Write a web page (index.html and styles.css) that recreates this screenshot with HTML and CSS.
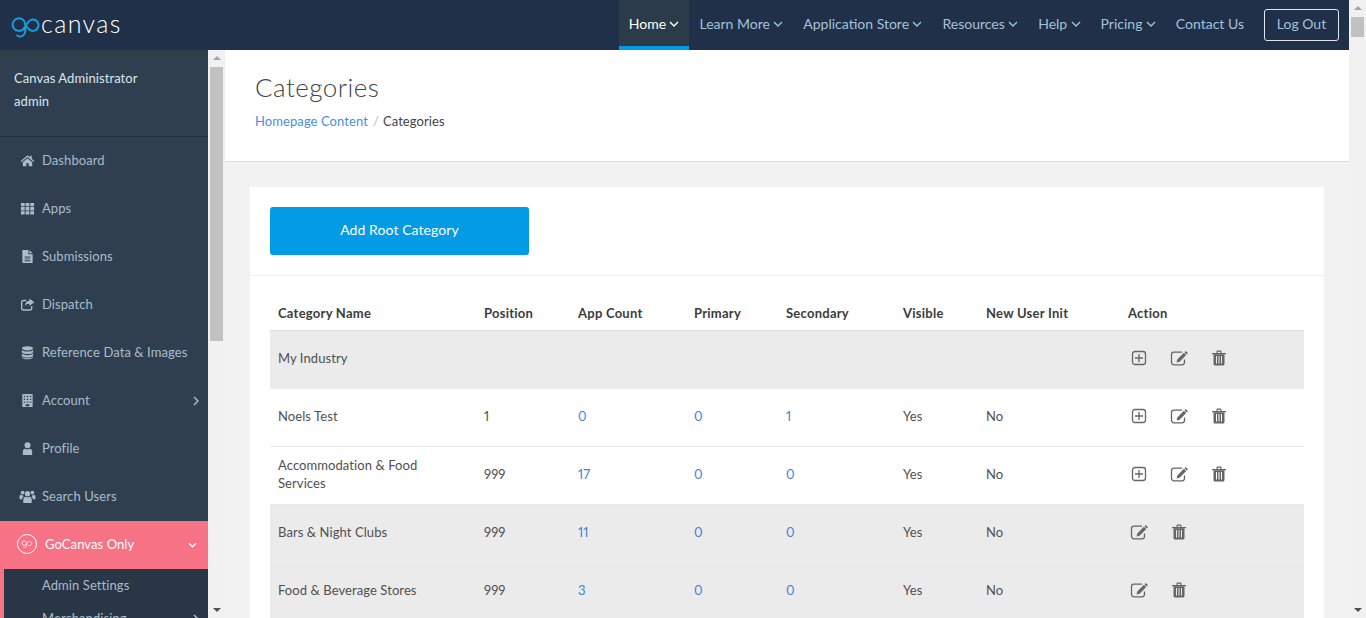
FILE: index.html
```html
<!DOCTYPE html>
<html lang="en">
<head>
  <meta charset="UTF-8">
  <title>Categories - GoCanvas</title>
  <link rel="stylesheet" href="styles.css">
</head>
<body>

  <svg class="sprite" width="0" height="0">
    <symbol id="i-down" viewBox="0 0 10 6"><path d="M1 1l4 4 4-4" fill="none" stroke="currentColor" stroke-width="1.4"/></symbol>
    <symbol id="i-right" viewBox="0 0 6 10"><path d="M1 1l4 4-4 4" fill="none" stroke="currentColor" stroke-width="1.5"/></symbol>
    <symbol id="i-plus" viewBox="0 0 16 16"><rect x="1.5" y="1.5" width="13" height="13" rx="2.5" fill="none" stroke="currentColor" stroke-width="1.3"/><path d="M8 4v8M4 8h8" stroke="currentColor" stroke-width="1.3"/></symbol>
    <symbol id="i-edit" viewBox="0 0 19 16"><path d="M12 2.2H4a2.5 2.5 0 0 0-2.5 2.5v7.6A2.5 2.5 0 0 0 4 14.800h8a2.500 2.500 0 0 0 2.500-2.500V9.500" fill="none" stroke="currentColor" stroke-width="1.3"/><path d="M15.700 1l2.300 2.300-1.200 1.200-2.300-2.300zM13.900 2.800l2.300 2.300-6.600 6.600-3 .7.700-3z" fill="currentColor"/></symbol>
    <symbol id="i-trash" viewBox="0 0 14 16"><path d="M0 3h14v1.300H0zM4.500 3V1.500C4.500 .9 5 .5 5.500 .5h3c.5 0 1 .4 1 1V3H8.400V1.700H5.600V3z" fill="currentColor"/><path d="M1.500 4.300h11V14c0 .9-.6 1.500-1.400 1.500H2.900c-.8 0-1.400-.6-1.400-1.500zM4 6v7.500h1V6zM6.500 6v7.500h1V6zM9 6v7.500h1V6z" fill="currentColor" fill-rule="evenodd"/></symbol>
  </svg>

  <div class="page">
    <header class="topbar">
      <a class="logo">
        <svg class="logo-go" viewBox="0 0 30 24" width="30" height="24"><path d="M14.300 10.500a6.300 6.300 0 1 0-2 4.700c3-3 4.500-9.700 9.500-9.700a5.700 5.700 0 1 1-4.500 9.200c-1-1.200-2-2.700-3-4.200v6.500c0 3-2.300 5.500-5.300 5.500-1.500 0-2.700-.5-3.500-1.500" fill="none" stroke="#1a9bdb" stroke-width="2"/></svg>
        <span class="logo-text">canvas</span>
      </a>
      <nav class="nav">
        <a class="nav-item active">Home <svg class="chev"><use href="#i-down"/></svg></a>
        <a class="nav-item">Learn More <svg class="chev"><use href="#i-down"/></svg></a>
        <a class="nav-item">Application Store <svg class="chev"><use href="#i-down"/></svg></a>
        <a class="nav-item">Resources <svg class="chev"><use href="#i-down"/></svg></a>
        <a class="nav-item">Help <svg class="chev"><use href="#i-down"/></svg></a>
        <a class="nav-item">Pricing <svg class="chev"><use href="#i-down"/></svg></a>
        <a class="nav-item">Contact Us</a>
        <a class="logout">Log Out</a>
      </nav>
    </header>

    <div class="layout">
      <aside class="sidebar">
        <div class="user-box">
          <div>Canvas Administrator</div>
          <div>admin</div>
        </div>
        <ul class="menu">
          <li class="menu-item">
            <svg class="menu-icon" viewBox="0 0 16 16"><path d="M8 2.500L.8 8.500l.8 1L8 4.200l6.400 5.300.8-1-2.700-2.300V3h-2v1.500zM3 9.800V14h3.700v-3h2.600v3H13V9.800L8 5.600z"/></svg>
            Dashboard
          </li>
          <li class="menu-item">
            <svg class="menu-icon" viewBox="0 0 16 16"><path d="M1 2h4v3.600H1zM6 2h4v3.600H6zM11 2h4v3.600h-4zM1 6.400h4V10H1zM6 6.400h4V10H6zM11 6.400h4V10h-4zM1 10.800h4v3.600H1zM6 10.800h4v3.600H6zM11 10.800h4v3.600h-4z"/></svg>
            Apps
          </li>
          <li class="menu-item">
            <svg class="menu-icon" viewBox="0 0 16 16"><path fill-rule="evenodd" d="M2.500 1H9v4.500h4.500V15h-11zM5 8v1h6V8zM5 10v1h6v-1zM5 12v1h6v-1z"/><path d="M10 1l3.500 3.500H10z"/></svg>
            Submissions
          </li>
          <li class="menu-item">
            <svg class="menu-icon" viewBox="0 0 16 16"><path d="M10 1.500l5.200 4-5.200 4V7.200C7.500 7.200 6 8 5.400 10 5.200 6.500 7 4.300 10 4z"/><path d="M12.500 9.500V12c0 1-.6 1.800-1.700 1.800H3.500c-1 0-1.700-.8-1.700-1.800V5.500c0-1 .7-1.800 1.700-1.800h3.200" fill="none" stroke="currentColor" stroke-width="1.500"/></svg>
            Dispatch
          </li>
          <li class="menu-item">
            <svg class="menu-icon" viewBox="0 0 16 16"><ellipse cx="8" cy="3.500" rx="6" ry="2.300"/><path d="M2 5c1 1.500 3.500 2 6 2s5-.5 6-2v2.600c-1 1.500-3.500 2-6 2s-5-.5-6-2zM2 8.800c1 1.500 3.500 2 6 2s5-.5 6-2v2.600c-1 1.500-3.500 2-6 2s-5-.5-6-2z"/><path d="M2 12.400c1 1.200 3.500 1.700 6 1.700s5-.5 6-1.700v1c-1 1.400-3.500 1.900-6 1.900s-5-.5-6-1.900z"/></svg>
            Reference Data &amp; Images
          </li>
          <li class="menu-item">
            <svg class="menu-icon" viewBox="0 0 16 16"><path fill-rule="evenodd" d="M2.500 1h11v14h-11zM4 3v1.500h1.500V3zM7.200 3v1.500h1.600V3zM10.500 3v1.500H12V3zM4 6v1.500h1.500V6zM7.200 6v1.500h1.600V6zM10.500 6v1.500H12V6zM4 9v1.500h1.500V9zM7.200 9v1.500h1.600V9zM10.500 9v1.500H12V9zM6 12v2h4v-2z"/></svg>
            Account
            <svg class="menu-arrow"><use href="#i-right"/></svg>
          </li>
          <li class="menu-item">
            <svg class="menu-icon" viewBox="0 0 16 16"><circle cx="8" cy="4.500" r="3.200"/><path d="M3 14v-2.500C3 9.500 4.300 8.300 6 8.300c.6.500 1.200.7 2 .7s1.400-.2 2-.7c1.700 0 3 1.200 3 3.200V14c0 .6-.5 1-1 1H4c-.5 0-1-.4-1-1z"/></svg>
            Profile
          </li>
          <li class="menu-item">
            <svg class="menu-icon users" viewBox="0 0 18 16"><circle cx="9" cy="5" r="2.800"/><circle cx="3.800" cy="3.800" r="2"/><circle cx="14.200" cy="3.800" r="2"/><path d="M4.500 14v-2.500c0-2 1.300-3.200 2.500-3.200.6.400 1.200.6 2 .6s1.400-.2 2-.6c1.200 0 2.500 1.200 2.500 3.200V14c0 .6-.5 1-1 1h-7c-.5 0-1-.4-1-1zM.5 10V8c0-1.300.8-2 1.700-2 .5.500 1 .7 1.700.7.200.5.500.9.900 1.200C3.800 8.500 3.300 9.500 3.300 11H1.500c-.6 0-1-.4-1-1zM17.500 10V8c0-1.300-.8-2-1.700-2-.5.500-1 .7-1.700.7-.2.500-.5.900-.9 1.200 1 .6 1.500 1.600 1.500 3.100h1.800c.6 0 1-.4 1-1z"/></svg>
            Search Users
          </li>
          <li class="menu-item only">
            <svg class="only-icon" viewBox="0 0 20 20"><circle cx="10" cy="10" r="9.500" fill="none" stroke="currentColor"/><path d="M9.500 9a2.200 2.200 0 1 0-.7 1.700C10 9.500 10.500 7.500 12.500 7.500a2.100 2.100 0 1 1-1.700 3.400M9.500 9v2.500c0 1.200-.8 2-1.800 2-.6 0-1-.2-1.300-.5" fill="none" stroke="currentColor" stroke-width=".8"/></svg>
            GoCanvas Only
            <svg class="menu-arrow down"><use href="#i-down"/></svg>
          </li>
        </ul>
        <ul class="submenu">
          <li class="sub-item">Admin Settings</li>
          <li class="sub-item">Merchandising <svg class="menu-arrow"><use href="#i-right"/></svg></li>
        </ul>
      </aside>

      <div class="scrollbar side-scroll">
        <span class="arrow-up"></span>
        <span class="thumb"></span>
        <span class="arrow-down"></span>
      </div>

      <main class="main">
        <section class="page-head">
          <h1>Categories</h1>
          <div class="crumbs"><a>Homepage Content</a><span class="sep">/</span>Categories</div>
        </section>

        <section class="card">
          <div class="card-top">
            <a class="btn-add">Add Root Category</a>
          </div>
          <div class="card-body">
            <table class="cats">
              <thead>
                <tr>
                  <th>Category Name</th><th>Position</th><th>App Count</th><th>Primary</th><th>Secondary</th><th>Visible</th><th>New User Init</th><th>Action</th>
                </tr>
              </thead>
              <tbody>
                <tr class="grey">
                  <td>My Industry</td><td></td><td></td><td></td><td></td><td></td><td></td>
                  <td><div class="actions"><svg class="ic-plus"><use href="#i-plus"/></svg><svg class="ic-edit"><use href="#i-edit"/></svg><svg class="ic-trash"><use href="#i-trash"/></svg></div></td>
                </tr>
                <tr>
                  <td>Noels Test</td><td>1</td><td><a>0</a></td><td><a>0</a></td><td><a>1</a></td><td>Yes</td><td>No</td>
                  <td><div class="actions"><svg class="ic-plus"><use href="#i-plus"/></svg><svg class="ic-edit"><use href="#i-edit"/></svg><svg class="ic-trash"><use href="#i-trash"/></svg></div></td>
                </tr>
                <tr>
                  <td>Accommodation &amp; Food Services</td><td>999</td><td><a>17</a></td><td><a>0</a></td><td><a>0</a></td><td>Yes</td><td>No</td>
                  <td><div class="actions"><svg class="ic-plus"><use href="#i-plus"/></svg><svg class="ic-edit"><use href="#i-edit"/></svg><svg class="ic-trash"><use href="#i-trash"/></svg></div></td>
                </tr>
                <tr class="grey">
                  <td>Bars &amp; Night Clubs</td><td>999</td><td><a>11</a></td><td><a>0</a></td><td><a>0</a></td><td>Yes</td><td>No</td>
                  <td><div class="actions"><svg class="ic-edit"><use href="#i-edit"/></svg><svg class="ic-trash"><use href="#i-trash"/></svg></div></td>
                </tr>
                <tr class="grey">
                  <td>Food &amp; Beverage Stores</td><td>999</td><td><a>3</a></td><td><a>0</a></td><td><a>0</a></td><td>Yes</td><td>No</td>
                  <td><div class="actions"><svg class="ic-edit"><use href="#i-edit"/></svg><svg class="ic-trash"><use href="#i-trash"/></svg></div></td>
                </tr>
              </tbody>
            </table>
          </div>
        </section>
      </main>
    </div>
  </div>

  <div class="scrollbar page-scroll">
    <span class="arrow-up"></span>
    <span class="thumb"></span>
    <span class="arrow-down"></span>
  </div>

</body>
</html>
```

FILE: styles.css
```css
* {
  box-sizing: border-box;
}

html, body {
  height: 618px;
  overflow: hidden;
}

body {
  margin: 0;
  display: flex;
  font-family: Lato, "Open Sans", sans-serif;
  font-size: 13px;
  letter-spacing: 0.08px;
  font-variant-numeric: proportional-nums;
  color: #505050;
  background: #fff;
}

ul {
  list-style: none;
  margin: 0;
  padding: 0;
}

.sprite {
  display: block;
  width: 0;
  height: 0;
}

.page {
  flex: 1;
  min-width: 0;
  height: 618px;
  display: flex;
  flex-direction: column;
}

/* top bar */
.topbar {
  flex: none;
  height: 50px;
  background: #1f3048;
  display: flex;
  justify-content: space-between;
  align-items: stretch;
  padding-right: 10px;
}

.logo {
  display: flex;
  align-items: flex-start;
  padding: 14px 0 0 11px;
}

.logo-go {
  display: block;
}

.logo-text {
  color: #fff;
  font-size: 25px;
  font-weight: 300;
  line-height: 18px;
  letter-spacing: 1.4px;
}

.nav {
  display: flex;
  align-items: stretch;
}

.nav-item {
  display: flex;
  align-items: center;
  gap: 3.4px;
  padding: 0 10px 3px;
  color: #a5c2d8;
  font-size: 14px;
  letter-spacing: 0;
  white-space: nowrap;
}

.nav-item.active {
  background: #2b3b4a;
  color: #fff;
  border-bottom: 4px solid #039be5;
  padding-top: 1px;
  padding-bottom: 0;
}

.chev {
  width: 10px;
  height: 6px;
}

.logout {
  display: flex;
  align-items: center;
  justify-content: center;
  align-self: center;
  width: 75px;
  height: 32px;
  margin-left: 10px;
  padding-bottom: 3px;
  border: 1px solid #dfe7ee;
  border-radius: 3px;
  color: #a5c2d8;
  font-size: 14px;
  letter-spacing: 0;
}

/* below the bar */
.layout {
  flex: 1;
  min-height: 0;
  display: flex;
}

.sidebar {
  flex: none;
  width: 208px;
  background: #2f3f50;
  overflow: hidden;
}

.user-box {
  height: 87px;
  padding: 17px 14px 0;
  border-bottom: 1px solid #24303e;
  color: #dce6ee;
  line-height: 23px;
}

.menu-item {
  position: relative;
  display: flex;
  align-items: center;
  height: 48px;
  padding: 0 0 2px 20px;
  color: #a9bccb;
}

.menu-icon {
  flex: none;
  width: 15px;
  height: 15px;
  margin-right: 7px;
  fill: #a9bccb;
  color: #a9bccb;
}

.menu-icon.users {
  width: 17px;
  margin-left: -1px;
  margin-right: 6px;
}

.menu-arrow {
  position: absolute;
  right: 9px;
  top: 50%;
  width: 6px;
  height: 10px;
  margin-top: -5px;
}

.menu-arrow.down {
  width: 9px;
  height: 6px;
  margin-top: -3px;
  right: 11px;
}

.menu-item.only {
  padding-left: 17px;
  background: #f87285;
  color: #fff;
}

.only-icon {
  flex: none;
  width: 20px;
  height: 20px;
  margin-right: 8px;
}

.submenu {
  margin-left: 4px;
  background: #283646;
  box-shadow: -4px 0 0 #f87285;
}

.sub-item {
  position: relative;
  display: flex;
  align-items: center;
  height: 33px;
  padding: 0 0 2px 38px;
  color: #a9bccb;
}

/* fake scrollbars */
.scrollbar {
  flex: none;
  width: 17px;
  height: 568px;
  background: #f1f1f1;
  display: flex;
  flex-direction: column;
  align-items: center;
}

.page-scroll {
  height: 618px;
}

.arrow-up {
  margin-top: 6px;
  border: 4px solid transparent;
  border-top: 0;
  border-bottom: 4px solid #a3a3a3;
}

.arrow-down {
  margin-top: auto;
  margin-bottom: 6px;
  border: 4px solid transparent;
  border-bottom: 0;
  border-top: 4px solid #505050;
}

.thumb {
  width: 13px;
  background: #c1c1c1;
}

.side-scroll .thumb {
  height: 274px;
  margin-top: 7px;
}

.page-scroll .thumb {
  height: 20px;
  margin-top: 7px;
}

/* content */
.main {
  flex: 1;
  min-width: 0;
  background: #f2f2f2;
  overflow: hidden;
}

.page-head {
  height: 112px;
  padding: 21px 30px 0;
  background: #fff;
  border-bottom: 1px solid #ddd;
}

h1 {
  margin: 0;
  font-size: 26px;
  font-weight: 300;
  line-height: 32px;
  letter-spacing: 0.45px;
  color: #444;
}

.crumbs {
  margin-top: 9px;
  line-height: 18px;
  color: #444;
}

.crumbs a {
  color: #4a8fe0;
}

.sep {
  margin: 0 4px 0 5px;
  color: #bbb;
}

.card {
  margin: 25px 25px 0;
  background: #fff;
}

.card-top {
  height: 89px;
  padding: 20px;
  border-bottom: 1px solid #eee;
}

.btn-add {
  display: flex;
  align-items: center;
  justify-content: center;
  width: 259px;
  height: 48px;
  padding-bottom: 3px;
  border-radius: 3px;
  background: #039be5;
  color: #fff;
  font-size: 14px;
  letter-spacing: 0.08px;
}

.card-body {
  padding: 20px 20px 0;
}

.cats {
  width: 1034px;
  table-layout: fixed;
  border-collapse: collapse;
}

.cats th {
  height: 34px;
  padding: 0 8px;
  text-align: left;
  font-weight: 700;
  letter-spacing: 0.25px;
  color: #3c3c3c;
  border-bottom: 1px solid #ddd;
}

.cats td {
  height: 58px;
  padding: 0 8px 2px;
  line-height: 18px;
  border-bottom: 1px solid #e9e9e9;
}

.cats td:first-child {
  padding-right: 40px;
}

.cats tr.grey td {
  background: #ebebeb;
  border-bottom-color: #eeeeee;
}

.cats a {
  color: #3b83dc;
}

.cats th:nth-child(1) { width: 206px; }
.cats th:nth-child(2) { width: 94px; }
.cats th:nth-child(3) { width: 116px; }
.cats th:nth-child(4) { width: 92px; }
.cats th:nth-child(5) { width: 117px; }
.cats th:nth-child(6) { width: 83px; }
.cats th:nth-child(7) { width: 142px; }

.actions {
  display: flex;
  align-items: center;
  padding-left: 3px;
  gap: 23px;
  color: #666;
}

.ic-plus {
  width: 16px;
  height: 16px;
}

.ic-edit {
  width: 19px;
  height: 16px;
}

.ic-edit:first-child {
  margin-left: -1px;
}

.ic-trash {
  width: 14px;
  height: 16px;
}
```
